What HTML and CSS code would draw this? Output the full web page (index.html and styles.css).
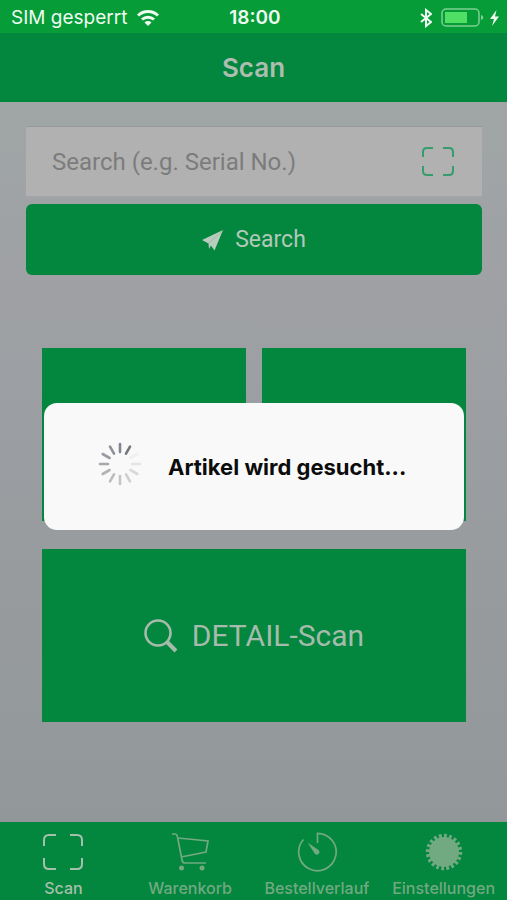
FILE: index.html
```html
<!DOCTYPE html>
<html lang="de">
<head>
<meta charset="utf-8">
<meta name="viewport" content="width=device-width, initial-scale=1">
<title>Scan</title>
<link rel="stylesheet" href="styles.css">
</head>
<body>
<div class="app">
  <div class="status">
    <div class="status-left">
      <span>SIM gesperrt</span>
      <svg width="24" height="18" viewBox="0 0 24 18" fill="none" stroke="#eefbf0" stroke-width="3">
        <path d="M2 6.500a14.500 14.500 0 0 1 20 0M6 10.500a9 9 0 0 1 12 0"/>
        <path d="M8.500 13.500a5 5 0 0 1 7 0L12 17z" fill="#eefbf0" stroke="none"/>
      </svg>
    </div>
    <strong class="clock">18:00</strong>
    <div class="status-right">
      <svg width="12" height="20" viewBox="0 0 12 20" fill="none" stroke="#eefbf0" stroke-width="2"><path d="M1 6l10 8-5 4V2l5 4-10 8"/></svg>
      <svg class="battery" width="44" height="20" viewBox="0 0 44 20"><rect x="1" y="1" width="37" height="17" rx="4" fill="none" stroke="#7fd092" stroke-width="1.500"/><rect x="4" y="4" width="22" height="11" fill="#50df64"/><path d="M40 7c3 1 3 4 0 5z" fill="#7fd092"/></svg>
      <svg width="9" height="16" viewBox="0 0 9 16"><path d="M6.500 0L0 9h4l-2 7 7-9.500H5z" fill="#eefbf0"/></svg>
    </div>
  </div>
  <header class="header"><h1>Scan</h1></header>
  <main class="main">
    <form class="search">
      <div class="field">
        <input type="text" aria-label="Search" placeholder="Search (e.g. Serial No.)">
        <button class="scan" type="button" aria-label="Scan">
          <svg width="32" height="30" viewBox="0 0 32 30" fill="none" stroke="#359c6c" stroke-width="2"><path d="M1 10V5q0-4 4-4h6M21 1h6q4 0 4 4v5M31 19v5q0 4-4 4h-6M11 28H5q-4 0-4-4v-5"/></svg>
        </button>
      </div>
      <button class="submit" type="button">
        <svg width="22" height="22" viewBox="0 0 22 22" fill="#b9cdbf"><path d="M21 1L0 11l6.500 3.500zM21 1L8 15.200 12.500 21.500z"/><path d="M21 1L6.500 14.500 7 20l2-3.500z"/></svg>
        <span>Search</span>
      </button>
    </form>
    <div class="tiles">
      <div class="tile"></div>
      <div class="tile"></div>
      <button class="tile wide" type="button">
        <svg width="34" height="34" viewBox="0 0 34 34" fill="none" stroke="#a5bbab"><circle cx="14" cy="14" r="12.500" stroke-width="2.600"/><path d="M22.500 22.500L32 32" stroke-width="4"/></svg>
        <span>DETAIL-Scan</span>
      </button>
    </div>
  </main>
  <nav class="tabs">
    <a class="tab active" href="#scan">
      <svg width="40" height="40" viewBox="0 0 40 40" fill="none" stroke="currentColor" stroke-width="2"><path d="M1 14V8q0-5 5-5h7M27 3h7q5 0 5 5v6M39 26v6q0 5-5 5h-7M13 37H6q-5 0-5-5v-6"/></svg>
      <span>Scan</span>
    </a>
    <a class="tab" href="#warenkorb">
      <svg width="40" height="40" viewBox="0 0 40 40" fill="none" stroke="currentColor" stroke-width="1.700"><path d="M2 2h3q2 0 2.500 3l4.500 23q.500 3 3 3h21M8 6l30 3-2 11-25 5"/><circle cx="11.500" cy="36" r="2.500" fill="currentColor" stroke="none"/><circle cx="32" cy="36" r="2.500" fill="currentColor" stroke="none"/></svg>
      <span>Warenkorb</span>
    </a>
    <a class="tab" href="#bestellverlauf">
      <svg width="40" height="40" viewBox="0 0 40 40" fill="none" stroke="currentColor" stroke-width="1.700"><path d="M20.500 11V1.300A18.700 18.700 0 1 1 6.500 7.500"/><path d="M10.500 10.500L21.500 18a2.600 2.600 0 0 1-3.500 4z" fill="currentColor" stroke="none"/></svg>
      <span>Bestellverlauf</span>
    </a>
    <a class="tab" href="#einstellungen">
      <svg width="40" height="40" viewBox="0 0 40 40"><circle cx="20" cy="20" r="15" fill="currentColor"/><circle cx="20" cy="20" r="16" fill="none" stroke="currentColor" stroke-width="4.500" pathLength="80" stroke-dasharray="2.200 1.800"/></svg>
      <span>Einstellungen</span>
    </a>
  </nav>
  <div class="overlay">
    <div class="dialog" role="status">
      <svg width="44" height="50" viewBox="-22 -22 44 50" stroke-width="2.600" stroke-linecap="round">
        <path d="M0-12V-20" stroke="#82868f"/>
        <path d="M0-12V-20" stroke="#73777f" transform="rotate(30)"/>
        <path d="M0-12V-20" stroke="#f0f0f0" transform="rotate(60)"/>
        <path d="M0-12V-20" stroke="#e4e4e4" transform="rotate(90)"/>
        <path d="M0-12V-20" stroke="#d9d9d9" transform="rotate(120)"/>
        <path d="M0-12V-20" stroke="#cfcfcf" transform="rotate(150)"/>
        <path d="M0-12V-20" stroke="#c5c5c6" transform="rotate(180)"/>
        <path d="M0-12V-20" stroke="#bcbcbe" transform="rotate(210)"/>
        <path d="M0-12V-20" stroke="#b2b3b6" transform="rotate(240)"/>
        <path d="M0-12V-20" stroke="#a6a8ac" transform="rotate(270)"/>
        <path d="M0-12V-20" stroke="#9a9ca2" transform="rotate(300)"/>
        <path d="M0-12V-20" stroke="#8e9198" transform="rotate(330)"/>
      </svg>
      <span>Artikel wird gesucht...</span>
    </div>
  </div>
</div>
</body>
</html>
```
FILE: styles.css
```css
* { box-sizing: border-box; }
body { margin: 0; font-family: Inter, sans-serif; }
button, input { font: inherit; border: 0; margin: 0; padding: 0; border-radius: 0; }
svg { display: block; flex: none; }

.app {
  position: relative;
  display: flex;
  flex-direction: column;
  min-height: 100vh;
  background: linear-gradient(#a0a6a6 102px, #9fa1a5 30%, #929799 822px);
}

.status {
  display: grid;
  grid-template-columns: 1fr auto 1fr;
  align-items: center;
  height: 33px;
  padding: 2px 8px 0 11px;
  background: #069c37;
  color: #eefbf0;
  font-size: 19px;
}
.status-left, .status-right { display: flex; align-items: center; }
.status-left { gap: 9px; }
.status-right { justify-content: flex-end; gap: 9px; }
.battery { margin-right: -4px; }
.clock { font-weight: 600; }

.header {
  display: flex;
  align-items: center;
  justify-content: center;
  height: 69px;
  background: #03863d;
}
h1 { margin: 0; font-size: 26px; font-weight: 600; color: #adbeb0; }

.main { flex: 1; padding: 24px 25px 24px 26px; }
.search { font-family: Roboto, sans-serif; font-size: 24px; }
.field {
  display: flex;
  align-items: center;
  height: 71px;
  padding: 0 28px 0 26px;
  border-top: 1px solid #97999a;
  border-bottom: 1px solid #a5a5a7;
  background: #b1b1b1;
}
.field input { flex: 1; min-width: 0; background: none; color: #777; outline: 0; }
.field input::placeholder { color: #7c7c7c; opacity: 1; }
.scan { background: none; }
.submit {
  display: flex;
  align-items: center;
  justify-content: center;
  gap: 11px;
  width: 100%;
  height: 71px;
  margin-top: 7px;
  border-radius: 6px;
  background: #03863d;
  color: #b0c9b8;
  font-size: 23px;
}

.tiles {
  display: grid;
  grid-template-columns: 1fr 1fr;
  grid-auto-rows: 173px;
  gap: 28px 16px;
  margin: 73px 16px 0;
}
.tile { background: #03863d; }
.wide {
  grid-column: 1 / -1;
  display: flex;
  align-items: center;
  justify-content: center;
  gap: 14px;
  font-family: Roboto, sans-serif;
  font-size: 30px;
  color: #a5bbab;
}

.tabs {
  display: grid;
  grid-template-columns: repeat(4, 1fr);
  height: 78px;
  background: #03863d;
}
.tab {
  display: flex;
  flex-direction: column;
  align-items: center;
  gap: 7px;
  padding-top: 10px;
  color: #71a981;
  font-size: 16px;
  line-height: 18px;
  font-weight: 500;
  text-decoration: none;
}
.active { color: #a5c0ab; }

.overlay {
  position: absolute;
  inset: 33px 0 0;
  display: flex;
  align-items: center;
  justify-content: center;
  padding: 0 43px 0 44px;
}
.dialog {
  display: flex;
  align-items: center;
  gap: 26px;
  width: 100%;
  height: 127px;
  padding: 0 54px;
  border-radius: 13px;
  background: #f9f9f9;
  color: #0c0c0c;
  font-size: 22px;
  font-weight: 700;
  white-space: nowrap;
}
```
